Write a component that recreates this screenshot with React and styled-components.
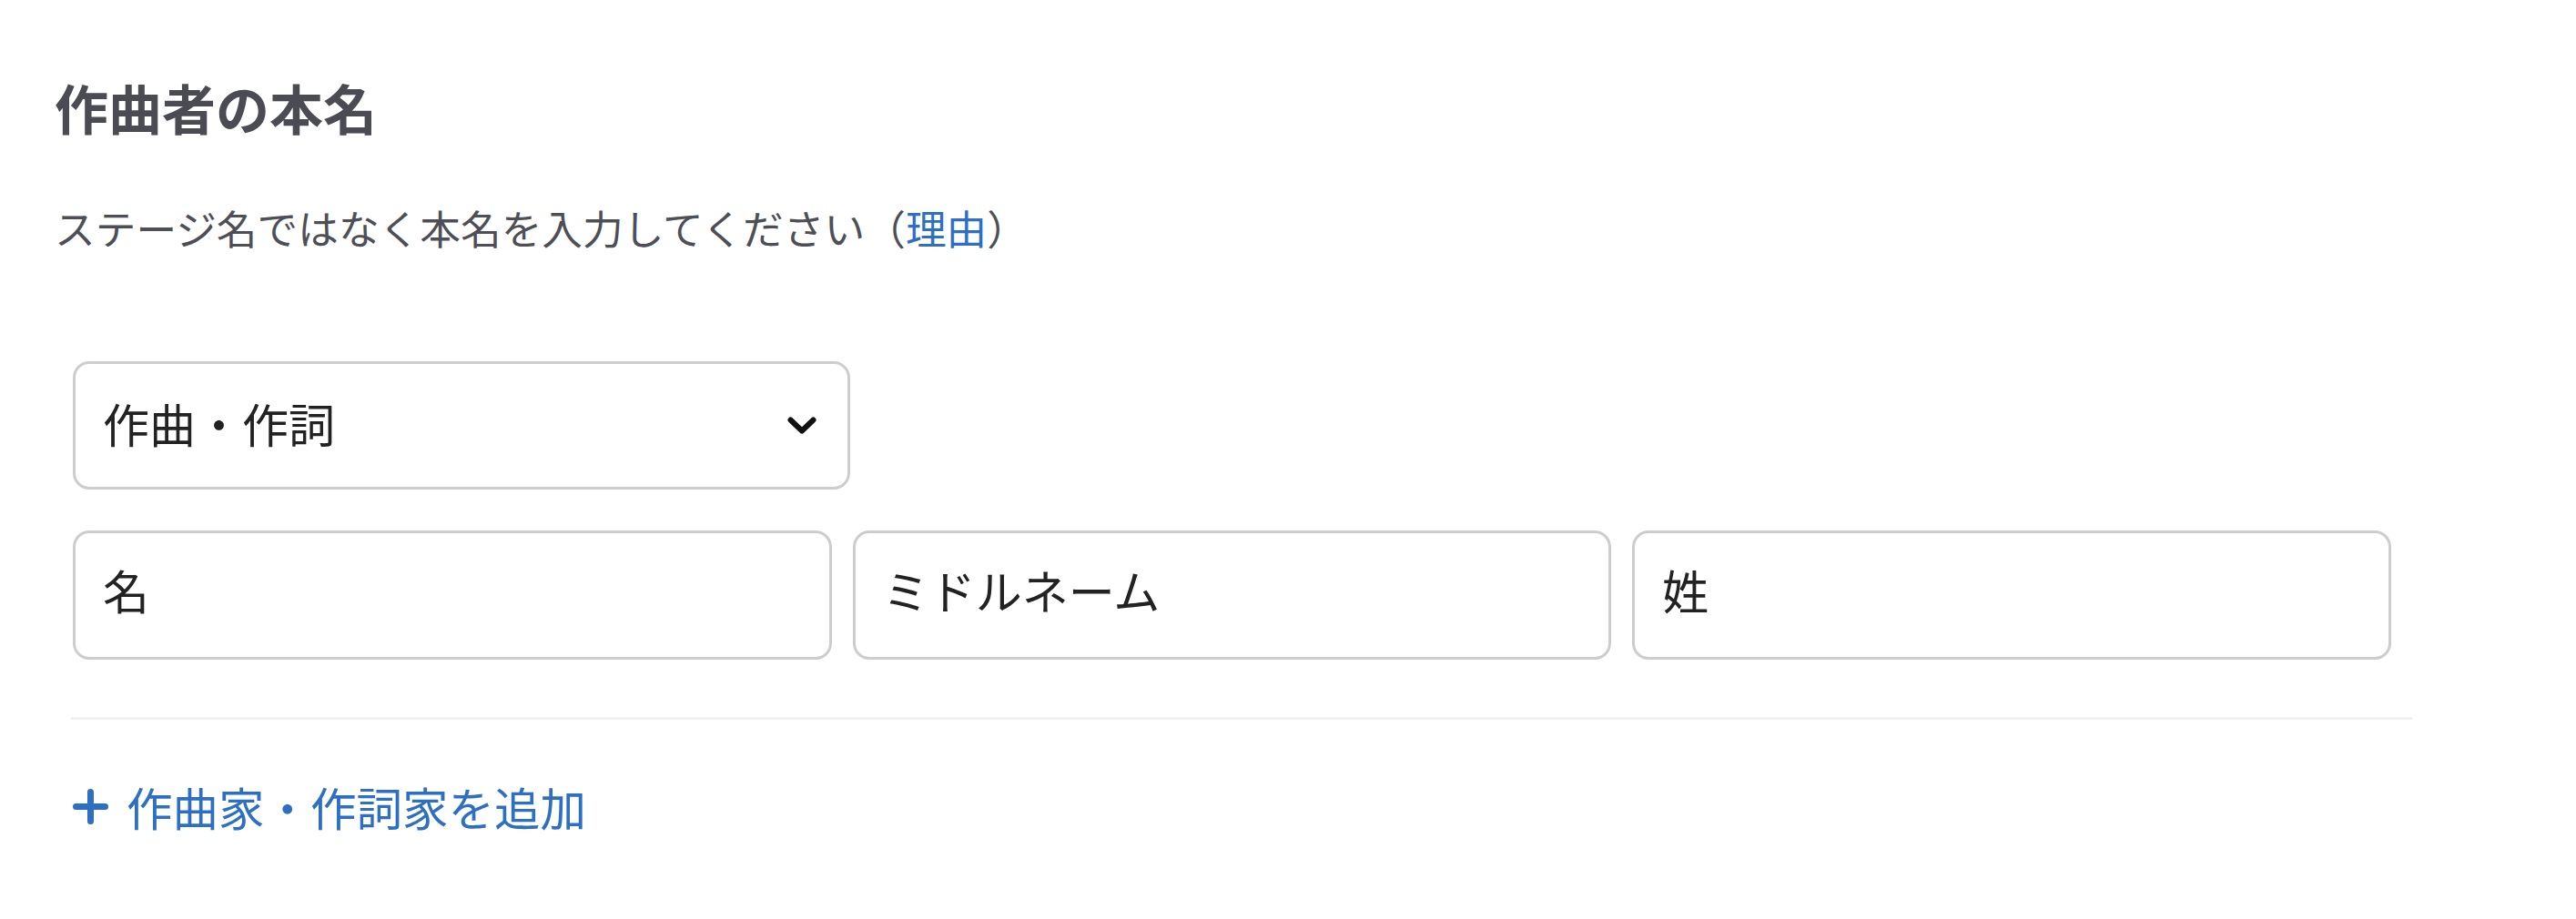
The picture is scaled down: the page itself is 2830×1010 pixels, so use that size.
import React from "react";
import styled, { createGlobalStyle } from "styled-components";

const GlobalStyle = createGlobalStyle`
  * { box-sizing: border-box; }
  html, body { margin: 0; padding: 0; background: #ffffff; }
  body {
    font-family: "Noto Sans CJK JP", "Noto Sans", sans-serif;
    -webkit-font-smoothing: antialiased;
  }
`;

const Page = styled.div`
  width: 2830px;
  min-height: 1010px;
  padding: 88px 0 0 60px;
  display: flex;
  flex-direction: column;
`;

const Heading = styled.h2`
  margin: 0;
  font-size: 59px;
  line-height: 59px;
  font-weight: 700;
  color: #4b4b53;
`;

const Subtitle = styled.p`
  margin: 80px 0 0;
  font-size: 44.7px;
  line-height: 45px;
  color: #4e4e56;
`;

const Link = styled.a`
  color: #2d6fc2;
  text-decoration: none;
  cursor: pointer;
`;

const Form = styled.div`
  margin: 125px 0 0 18px;
  width: 2572px;
  display: flex;
  flex-direction: column;
`;

const Fields = styled.div`
  padding-left: 2px;
  display: flex;
  flex-direction: column;
  gap: 45px;
`;

const SelectBox = styled.div`
  width: 854px;
  height: 141px;
  border: 3px solid #cdcdcd;
  border-radius: 18px;
  padding: 0 34px 0 30px;
  display: flex;
  align-items: center;
  justify-content: space-between;
  font-size: 51px;
  color: #222222;
  cursor: pointer;
`;

const SelectLabel = styled.span`
  padding-bottom: 5px;
`;

const NameRow = styled.div`
  width: 2547px;
  display: grid;
  grid-template-columns: repeat(3, 1fr);
  gap: 23px;
`;

const NameInput = styled.input`
  height: 142px;
  width: 100%;
  border: 3px solid #cdcdcd;
  border-radius: 18px;
  padding: 0 30px 12px;
  font-family: "Noto Sans CJK JP", "Noto Sans", sans-serif;
  font-size: 51px;
  color: #222222;
  background: #ffffff;
  outline: none;
  &::placeholder {
    color: #222222;
    opacity: 1;
  }
`;

const Divider = styled.hr`
  margin: 63px 0 0;
  height: 3px;
  border: 0;
  background: #f1f1f2;
  width: 100%;
`;

const AddButton = styled.button`
  margin: 70px 0 0 2px;
  padding: 0;
  border: 0;
  background: none;
  display: flex;
  align-items: center;
  gap: 20px;
  align-self: flex-start;
  font-family: "Noto Sans CJK JP", "Noto Sans", sans-serif;
  font-size: 50.5px;
  line-height: 50px;
  color: #2d6fc2;
  cursor: pointer;
`;

const Chevron = () => (
  <svg width="32" height="19" viewBox="0 0 32 19" fill="none">
    <path
      d="M3.5 3.5 L16 15.5 L28.5 3.5"
      stroke="#111111"
      strokeWidth="6"
      strokeLinecap="round"
      strokeLinejoin="round"
    />
  </svg>
);

const Plus = () => (
  <svg width="39" height="39" viewBox="0 0 39 39" fill="none">
    <path
      d="M3.5 19.5 H35.5 M19.5 3.5 V35.5"
      stroke="#2d6fc2"
      strokeWidth="7"
      strokeLinecap="round"
    />
  </svg>
);

export default function App() {
  return (
    <>
      <GlobalStyle />
      <Page>
        <Heading>作曲者の本名</Heading>
        <Subtitle>
          ステージ名ではなく本名を入力してください（<Link>理由</Link>）
        </Subtitle>
        <Form>
          <Fields>
            <SelectBox>
              <SelectLabel>作曲・作詞</SelectLabel>
              <Chevron />
            </SelectBox>
            <NameRow>
              <NameInput placeholder="名" />
              <NameInput placeholder="ミドルネーム" />
              <NameInput placeholder="姓" />
            </NameRow>
          </Fields>
          <Divider />
          <AddButton>
            <Plus />
            <span>作曲家・作詞家を追加</span>
          </AddButton>
        </Form>
      </Page>
    </>
  );
}
